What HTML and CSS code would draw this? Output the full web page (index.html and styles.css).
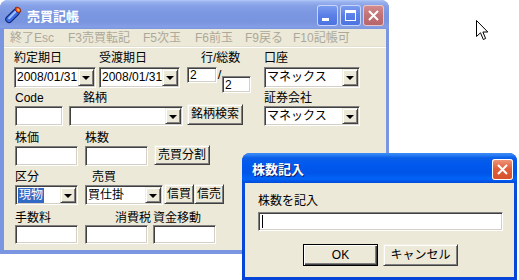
FILE: index.html
```html
<!DOCTYPE html>
<html lang="ja">
<head>
<meta charset="utf-8">
<title>売買記帳</title>
<link rel="stylesheet" href="styles.css">
</head>
<body>
<div class="desk">

  <div class="win main-win">
    <div class="title title-inactive">
      <svg class="app-icon" width="17" height="18" viewBox="0 0 17 18">
        <g transform="rotate(45 8 9)">
          <rect x="5" y="2" width="6.5" height="16" rx="3" fill="#3a6be6" stroke="#0d2470" stroke-width="1"/>
          <rect x="6.5" y="4" width="2" height="11" rx="1" fill="#9fc0ff"/>
        </g>
        <path d="M10.5 1.5 C13.5 0.5 16.5 2.5 15.5 6 L13 7 L10 4 Z" fill="#e24a22" stroke="#7a1a08" stroke-width="0.8"/>
        <path d="M12 2.5 C13.8 2.2 15 3.5 14.5 5 L12.8 5.5 Z" fill="#ffc23a"/>
      </svg>
      <span class="title-text">売買記帳</span>
      <div class="caps">
        <span class="cap cap-blue">
          <svg width="21" height="21" viewBox="0 0 21 21"><rect x="5" y="13" width="7" height="3" fill="#fff"/></svg>
        </span>
        <span class="cap cap-blue">
          <svg width="21" height="21" viewBox="0 0 21 21"><rect x="5.5" y="5.5" width="10" height="10" fill="none" stroke="#fff" stroke-width="1"/><rect x="5" y="5" width="11" height="3" fill="#fff"/></svg>
        </span>
        <span class="cap cap-red">
          <svg width="21" height="21" viewBox="0 0 21 21"><path d="M6 6 L15 15 M15 6 L6 15" stroke="#fff" stroke-width="2"/></svg>
        </span>
      </div>
    </div>

    <div class="client">
      <div class="menubar">
        <span class="mi mi-1">終了Esc</span>
        <span class="mi mi-2">F3売買転記</span>
        <span class="mi mi-3">F5次玉</span>
        <span class="mi mi-4">F6前玉</span>
        <span class="mi mi-5">F9戻る</span>
        <span class="mi mi-6">F10記帳可</span>
      </div>

      <div class="form">
        <div class="row row1">
          <div class="grp g-date1">
            <div class="lbl">約定期日</div>
            <div class="combo h21"><span class="val">2008/01/31</span><span class="arrow"></span></div>
          </div>
          <div class="grp g-date2">
            <div class="lbl">受渡期日</div>
            <div class="combo h21"><span class="val">2008/01/31</span><span class="arrow"></span></div>
          </div>
          <div class="grp g-line">
            <div class="lbl lbl-line">行/総数</div>
            <div class="line-ctrls">
              <div class="field edit e-row">2</div>
              <span class="slash">/</span>
              <div class="field edit e-total">2</div>
            </div>
          </div>
          <div class="grp g-acct">
            <div class="lbl">口座</div>
            <div class="combo h21"><span class="val">マネックス</span><span class="arrow"></span></div>
          </div>
        </div>

        <div class="row row2">
          <div class="grp g-code">
            <div class="lbl">Code</div>
            <div class="field edit h20"></div>
          </div>
          <div class="grp g-brand">
            <div class="lbl lbl-brand">銘柄</div>
            <div class="combo h20"><span class="val"></span><span class="arrow"></span></div>
          </div>
          <button class="btn b-search">銘柄検索</button>
          <div class="grp g-broker">
            <div class="lbl">証券会社</div>
            <div class="combo h20"><span class="val">マネックス</span><span class="arrow"></span></div>
          </div>
        </div>

        <div class="row row3">
          <div class="grp g-price">
            <div class="lbl">株価</div>
            <div class="field edit h20"></div>
          </div>
          <div class="grp g-qty">
            <div class="lbl">株数</div>
            <div class="field edit h20"></div>
          </div>
          <button class="btn b-split">売買分割</button>
        </div>

        <div class="row row4">
          <div class="grp g-kind">
            <div class="lbl">区分</div>
            <div class="combo h20"><span class="val"><span class="sel">現物</span></span><span class="arrow"></span></div>
          </div>
          <div class="grp g-trade">
            <div class="lbl lbl-trade">売買</div>
            <div class="combo h20"><span class="val">買仕掛</span><span class="arrow"></span></div>
          </div>
          <button class="btn b-credit b-credit1">信買</button>
          <button class="btn b-credit">信売</button>
        </div>

        <div class="row row5">
          <div class="grp g-fee">
            <div class="lbl">手数料</div>
            <div class="field edit h19"></div>
          </div>
          <div class="grp g-tax">
            <div class="lbl lbl-tax">消費税</div>
            <div class="field edit h19"></div>
          </div>
          <div class="grp g-move">
            <div class="lbl">資金移動</div>
            <div class="field edit h19"></div>
          </div>
        </div>
      </div>
    </div>
  </div>

  <div class="win dlg">
    <div class="title title-active">
      <span class="title-text dlg-title">株数記入</span>
      <span class="cap cap-close-active">
        <svg width="21" height="21" viewBox="0 0 21 21"><path d="M6 6 L15 15 M15 6 L6 15" stroke="#fff" stroke-width="2"/></svg>
      </span>
    </div>
    <div class="client dlg-client">
      <div class="lbl">株数を記入</div>
      <div class="field dlg-input"><span class="caret"></span></div>
      <div class="dlg-btns">
        <button class="btn btn-default">OK</button>
        <button class="btn">キャンセル</button>
      </div>
    </div>
  </div>

  <svg class="cursor" width="13" height="22" viewBox="0 0 13 22">
    <path d="M0.5 0.5 L0.5 16.5 L4.5 12.8 L7.3 19.5 L9.6 18.5 L6.9 12 L11.8 12 Z" fill="#fff" stroke="#000" stroke-width="1" stroke-linejoin="miter"/>
  </svg>

</div>
</body>
</html>
```

FILE: styles.css
```css
* { box-sizing: border-box; }

html, body {
  margin: 0;
  padding: 0;
  background: #fff;
}

body {
  font-family: "Liberation Sans", "Noto Sans CJK JP", sans-serif;
  font-size: 12px;
  color: #000;
}

.desk {
  position: relative;
  width: 519px;
  height: 280px;
  overflow: hidden;
  background: #fff;
}

/* ---------- windows ---------- */
.win {
  position: absolute;
  display: flex;
  flex-direction: column;
  border-radius: 8px 8px 0 0;
}

.main-win {
  left: 0;
  top: 0;
  width: 389px;
  height: 254px;
  background: #7b96e0;
}

.title {
  height: 29px;
  display: flex;
  align-items: center;
  border-radius: 8px 8px 0 0;
  flex: none;
}

.title-inactive {
  background: linear-gradient(to bottom, #b4c8f6 0px, #98b1ee 2px, #85a0e6 6px, #7a96e0 14px, #7a95df 22px, #849fe6 27px, #7a95df 29px);
  padding-left: 5px;
}

.app-icon {
  flex: none;
  margin-top: 1px;
}

.title-text {
  color: #fff;
  font-weight: bold;
  font-size: 13px;
  margin-left: 5px;
  font-family: "Noto Sans CJK JP", "Liberation Sans", sans-serif;
  line-height: 16px;
  margin-top: 2px;
}

.caps {
  margin-left: auto;
  margin-right: 5px;
  display: flex;
  gap: 2px;
  margin-top: 2px;
}

.cap {
  width: 21px;
  height: 21px;
  border-radius: 3px;
  display: block;
  flex: none;
}

.cap svg { display: block; }

.cap-blue {
  background: linear-gradient(to bottom, #7f9ff0, #5a7fe6 50%, #4c72e0);
  box-shadow: inset 0 0 0 1px #c8d5f8;
}

.cap-red {
  background: linear-gradient(to bottom, #d48e90, #c27174 50%, #b5646a);
  box-shadow: inset 0 0 0 1px #e8c6c8;
}

.client {
  flex: 1;
  margin: 0 3px 4px 4px;
  background: #ece9d8;
}

/* ---------- menu ---------- */
.menubar {
  height: 19px;
  display: flex;
  padding-left: 6px;
  border-bottom: 1px solid #fff;
  box-shadow: 0 -1px 0 #e2dfcf inset;
}

.mi {
  color: #aca899;
  line-height: 18px;
  white-space: nowrap;
  flex: none;
}

.mi-1 { width: 58px; }
.mi-2 { width: 75px; }
.mi-3 { width: 52px; }
.mi-4 { width: 50px; }
.mi-5 { width: 48px; }
.mi-6 { width: 60px; }

/* ---------- form ---------- */
.form {
  padding: 3px 0 0 10px;
}

.row {
  display: flex;
  align-items: flex-start;
}

.row1 { height: 40px; }
.row2 { height: 40px; }
.row3 { height: 39px; }
.row4 { height: 41px; }
.row5 { height: 30px; }

.grp {
  display: flex;
  flex-direction: column;
  flex: none;
}

.lbl {
  line-height: 14px;
  height: 14px;
  white-space: nowrap;
}

.row1 .lbl { margin-bottom: 2px; }
.row2 .lbl,
.row3 .lbl,
.row4 .lbl { margin-bottom: 1px; }

.field {
  background: #fff;
  border: 1px solid;
  border-color: #808080 #fff #fff #808080;
  box-shadow: inset 1px 1px 0 #404040, inset -1px -1px 0 #d4d0c8;
}

.edit {
  padding: 1px 2px;
  line-height: 14px;
}

.h21 { height: 21px; }
.h20 { height: 20px; }
.h19 { height: 19px; }

.combo {
  background: #fff;
  border: 1px solid;
  border-color: #808080 #fff #fff #808080;
  box-shadow: inset 1px 1px 0 #404040, inset -1px -1px 0 #d4d0c8;
  display: flex;
  padding: 1px;
}

.combo .val {
  flex: 1;
  padding-left: 1px;
  line-height: 15px;
  padding-top: 1px;
  white-space: nowrap;
  overflow: hidden;
}

.combo .arrow {
  width: 16px;
  flex: none;
  background: #ece9d8;
  border: 1px solid;
  border-color: #f1efe2 #404040 #404040 #f1efe2;
  box-shadow: inset 1px 1px 0 #fff, inset -1px -1px 0 #808080;
  display: flex;
  align-items: center;
  justify-content: center;
}

.combo .arrow::after {
  content: "";
  display: block;
  width: 0;
  height: 0;
  border-left: 4px solid transparent;
  border-right: 4px solid transparent;
  border-top: 4px solid #000;
  margin-top: 1px;
}

.sel {
  background: #316ac5;
  color: #fff;
  padding: 0 1px;
  display: inline-block;
  line-height: 15px;
}

.btn {
  font: inherit;
  font-size: 12px;
  color: #000;
  background: #ece9d8;
  border: 1px solid;
  border-color: #f1efe2 #404040 #404040 #f1efe2;
  box-shadow: inset 1px 1px 0 #fff, inset -1px -1px 0 #808080;
  padding: 0;
  margin: 0;
  height: 21px;
  line-height: 17px;
  white-space: nowrap;
  flex: none;
}

/* row 1 */
.g-date1 { width: 82px; }
.g-date2 { width: 81px; margin-left: 3px; }
.g-line { width: 64px; margin-left: 7px; }
.lbl-line { padding-left: 14px; }
.line-ctrls { display: flex; align-items: flex-start; }
.e-row { width: 30px; height: 16px; padding-top: 0; }
.slash { line-height: 14px; margin-top: 1px; width: 5px; text-align: center; font-size: 13px; }
.e-total { width: 29px; height: 17px; margin-top: 9px; padding-top: 1px; }
.g-acct { width: 96px; margin-left: 13px; }

/* row 2 */
.g-code { width: 48px; margin-left: 1px; }
.g-brand { width: 114px; margin-left: 6px; }
.lbl-brand { padding-left: 14px; }
.b-search { width: 56px; margin-left: 4px; margin-top: 13px; }
.g-broker { width: 96px; margin-left: 21px; }

/* row 3 */
.g-price { width: 63px; margin-left: 1px; }
.g-qty { width: 63px; margin-left: 7px; }
.b-split { width: 56px; margin-left: 6px; margin-top: 14px; height: 20px; }

/* row 4 */
.g-kind { width: 63px; margin-left: 1px; }
.g-trade { width: 78px; margin-left: 7px; }
.lbl-trade { padding-left: 7px; }
.b-credit { width: 30px; margin-top: 14px; height: 20px; }
.b-credit1 { margin-left: 1px; }

/* row 5 */
.g-fee { width: 63px; margin-left: 1px; }
.g-tax { width: 63px; margin-left: 7px; }
.lbl-tax { text-align: right; margin-right: -3px; }
.g-move { width: 63px; margin-left: 5px; }

/* ---------- dialog ---------- */
.dlg {
  left: 242px;
  top: 153px;
  width: 275px;
  height: 127px;
  background: linear-gradient(to bottom, #0a5ae8, #0749d8 40%, #0546d8);
}

.title-active {
  height: 30px;
  background: linear-gradient(to bottom, #3f8cf3 0px, #2b7ff5 2px, #0a5ee8 5px, #0058ee 12px, #0055e8 20px, #0063f8 26px, #004ad8 30px);
  padding-left: 6px;
  padding-right: 4px;
}

.dlg-title {
  margin-left: 4px;
  text-shadow: 1px 1px 0 #0a1e6e;
}

.cap-close-active {
  margin-left: auto;
  margin-top: 2px;
  background: linear-gradient(to bottom, #ef9a7f, #e0603c 45%, #d64f29);
  box-shadow: inset 0 0 0 1px #fff;
}

.dlg-client {
  margin: 0 3px 3px 3px;
  padding: 11px 0 0 13px;
}

.dlg-input {
  width: 245px;
  height: 19px;
  margin-top: 4px;
  padding: 2px 3px;
}

.caret {
  display: block;
  width: 1px;
  height: 13px;
  background: #000;
}

.dlg-btns {
  display: flex;
  gap: 5px;
  margin-top: 13px;
  padding-left: 45px;
}

.dlg-btns .btn {
  width: 75px;
  height: 22px;
  line-height: 18px;
}

.btn-default {
  border-color: #000;
  box-shadow: inset 1px 1px 0 #fff, inset -1px -1px 0 #404040, inset -2px -2px 0 #808080;
}

.cursor {
  position: absolute;
  left: 476px;
  top: 20px;
}
```
